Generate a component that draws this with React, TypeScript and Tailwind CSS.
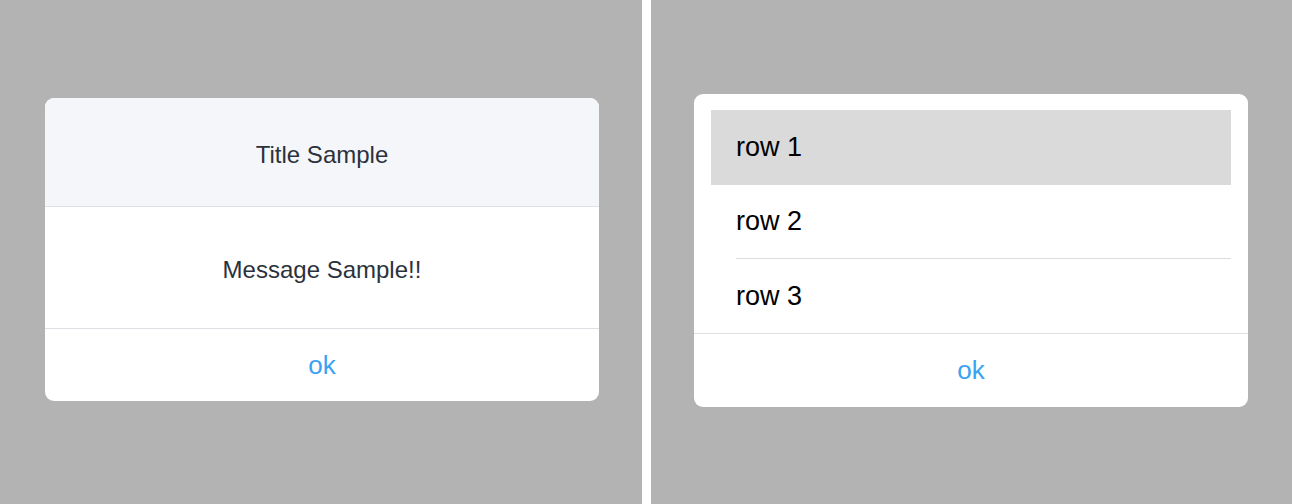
export default function App() {
  const rows = ['row 1', 'row 2', 'row 3'];
  return (
    <div className="flex h-[504px] w-[1292px] bg-white font-['Liberation_Sans',Arial,sans-serif]">
      <div className="h-full w-[642px] bg-[#b3b3b3] pl-[45px] pt-[98px]">
        <div className="flex w-[554px] flex-col overflow-hidden rounded-[9px] bg-white">
          <div className="flex h-[109px] items-center justify-center border-b border-[#dfe0e5] bg-[#f5f6fa] pt-[5px] text-[24px] text-[#2b323c]">
            Title Sample
          </div>
          <div className="flex h-[122px] items-center justify-center border-b border-[#dfe0e5] pt-[5px] text-[24px] text-[#2b323c]">
            Message Sample!!
          </div>
          <div className="flex h-[72px] items-center justify-center text-[26px] text-[#3aa2f3]">ok</div>
        </div>
      </div>
      <div className="ml-[9px] h-full flex-1 bg-[#b3b3b3] pl-[43px] pt-[94px]">
        <div className="flex w-[554px] flex-col overflow-hidden rounded-[9px] bg-white">
          <div className="px-[17px] pt-[16px]">
            {rows.map((row, i) => (
              <div
                key={row}
                className={
                  i === 0
                    ? 'flex h-[75px] items-center bg-[#dadada] pl-[25px] text-[27px] text-black'
                    : 'ml-[25px] flex h-[74px] items-center text-[27px] text-black ' + (i === 1 ? 'border-b border-[#dcdcdc]' : '')
                }
              >
                {row}
              </div>
            ))}
          </div>
          <div className="flex h-[74px] items-center justify-center border-t border-[#dfe0e5] text-[26px] text-[#3aa2f3]">ok</div>
        </div>
      </div>
    </div>
  );
}
